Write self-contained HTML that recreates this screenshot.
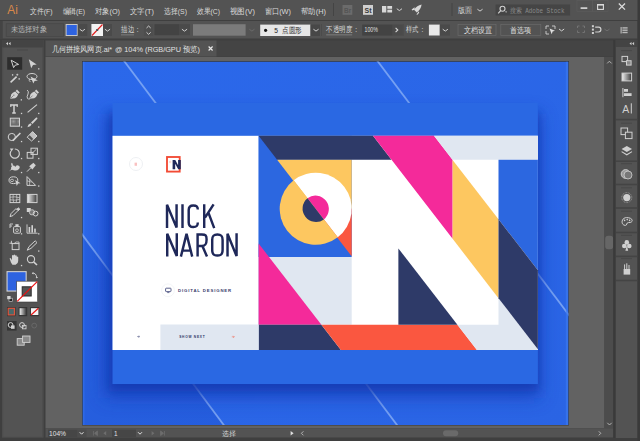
<!DOCTYPE html>
<html><head><meta charset="utf-8">
<style>
html,body{margin:0;padding:0;width:640px;height:441px;overflow:hidden;background:#424242;}
svg{position:absolute;left:0;top:0;}
text{font-family:"Liberation Sans",sans-serif;}
</style></head><body>
<svg width="640" height="441" viewBox="0 0 640 441">
<defs>
<linearGradient id="abg" x1="0" y1="0" x2="1" y2="1">
<stop offset="0" stop-color="#2b68ea"/><stop offset="1" stop-color="#2a64e4"/>
</linearGradient>
<linearGradient id="grad" x1="0" y1="0" x2="1" y2="0">
<stop offset="0" stop-color="#f0f0f0"/><stop offset="1" stop-color="#3a3a3a"/>
</linearGradient>
<filter id="soft"><feGaussianBlur stdDeviation="0.35"/></filter>
<filter id="sh2" x="-20%" y="-20%" width="140%" height="150%"><feGaussianBlur stdDeviation="4"/></filter>
<filter id="sh" x="-20%" y="-20%" width="140%" height="150%"><feGaussianBlur stdDeviation="9"/></filter>
<clipPath id="abclip"><rect x="82.5" y="61.5" width="486" height="363.5"/></clipPath>
<pattern id="hatch" width="1.2" height="1.2" patternUnits="userSpaceOnUse"><rect width="1.2" height="1.2" fill="#6e6e6e"/><rect width="0.6" height="0.6" fill="#9a9a9a"/></pattern>
</defs>
<rect x="0" y="0" width="640" height="441" fill="#3f3f3f"/>
<rect x="0" y="0" width="640" height="20" fill="#535353"/>
<rect x="0" y="21" width="637.5" height="17.5" fill="#535353"/>
<rect x="2" y="40" width="41.5" height="397.5" fill="#535353"/>
<rect x="2" y="40" width="41.5" height="7.3" fill="#444444"/><rect x="2.8" y="47.3" width="40" height="390" fill="none" stroke="#4a4a4a" stroke-width="0.8"/>
<rect x="17" y="49.5" width="11" height="1" fill="#484848"/>
<rect x="45.5" y="40.5" width="570" height="16" fill="#444444"/>
<rect x="45.5" y="40.5" width="171" height="16" fill="#535353"/>
<rect x="45.5" y="57" width="559" height="371.2" fill="#626262"/>
<rect x="604.4" y="57" width="9" height="371.2" fill="#4c4c4c"/>
<rect x="605.2" y="235.8" width="8" height="13.5" rx="3" fill="#666666"/>
<rect x="615.5" y="40" width="22" height="398" fill="#535353"/>
<rect x="615.5" y="40" width="22" height="7" fill="#444444"/>
<rect x="45.5" y="428.2" width="568" height="9.3" fill="#535353"/>
<text x="7.3" y="13.6" font-size="12.4" fill="#d9884a" textLength="10.5" lengthAdjust="spacingAndGlyphs">Ai</text>
<text x="30" y="13.6" font-size="8" fill="#dadada" font-weight="normal" textLength="22.5" lengthAdjust="spacingAndGlyphs" >文件(F)</text>
<text x="62.5" y="13.6" font-size="8" fill="#dadada" font-weight="normal" textLength="22.5" lengthAdjust="spacingAndGlyphs" >编辑(E)</text>
<text x="95" y="13.6" font-size="8" fill="#dadada" font-weight="normal" textLength="25.0" lengthAdjust="spacingAndGlyphs" >对象(O)</text>
<text x="130" y="13.6" font-size="8" fill="#dadada" font-weight="normal" textLength="24.0" lengthAdjust="spacingAndGlyphs" >文字(T)</text>
<text x="164" y="13.6" font-size="8" fill="#dadada" font-weight="normal" textLength="23.0" lengthAdjust="spacingAndGlyphs" >选择(S)</text>
<text x="197" y="13.6" font-size="8" fill="#dadada" font-weight="normal" textLength="23.0" lengthAdjust="spacingAndGlyphs" >效果(C)</text>
<text x="230" y="13.6" font-size="8" fill="#dadada" font-weight="normal" textLength="25.0" lengthAdjust="spacingAndGlyphs" >视图(V)</text>
<text x="264.5" y="13.6" font-size="8" fill="#dadada" font-weight="normal" textLength="26.5" lengthAdjust="spacingAndGlyphs" >窗口(W)</text>
<text x="301" y="13.6" font-size="8" fill="#dadada" font-weight="normal" textLength="25.0" lengthAdjust="spacingAndGlyphs" >帮助(H)</text>
<rect x="333" y="3" width="1" height="13" fill="#444444"/>
<rect x="342.5" y="5" width="9.8" height="9.8" fill="#6b6b6b"/>
<text x="344" y="12.6" font-size="6.5" fill="#555" font-weight="bold">Br</text>
<rect x="363" y="5" width="10" height="9.8" fill="#cfcfcf"/>
<text x="364.5" y="12.8" font-size="7" fill="#3a3a3a" font-weight="bold">St</text>
<rect x="382" y="6" width="4.3" height="6.5" fill="#d8d8d8"/><rect x="387.3" y="6" width="4.8" height="2.8" fill="#d8d8d8"/><rect x="387.3" y="9.7" width="4.8" height="2.8" fill="#d8d8d8"/>
<polyline points="396.79999999999995,8.7 399.4,10.600000000000001 402.0,8.7" fill="none" stroke="#d0d0d0" stroke-width="1.0"/>
<path d="M421.6,4.6 Q421,9.4 416.8,12.6 L414,9.8 Q417,5.4 421.6,4.6 Z M414.6,7.2 L411.6,9.6 L412.4,10.4 L414.6,9.6 Z M418.8,11.2 L416.4,14.4 L417.4,14.8 L419.2,12.8 Z" fill="#d8d8d8"/>
<rect x="451.5" y="3" width="1" height="13" fill="#444444"/>
<text x="457.6" y="13.2" font-size="8" fill="#d6d6d6" font-weight="normal" textLength="14.1" lengthAdjust="spacingAndGlyphs" >版面</text>
<polyline points="477.4,9.2 480,11.100000000000001 482.6,9.2" fill="none" stroke="#d0d0d0" stroke-width="1.0"/>
<rect x="495.6" y="4.5" width="74.5" height="11" fill="#454545"/>
<circle cx="502.5" cy="8.8" r="2.5" fill="none" stroke="#d0d0d0" stroke-width="1.1"/><line x1="500.7" y1="10.7" x2="498.2" y2="13.3" stroke="#d0d0d0" stroke-width="1.2"/><path d="M505,11.5 l2.2,0 l-1.1,1.3z" fill="#d0d0d0"/>
<text x="509.7" y="12.6" font-size="7" fill="#8a8a8a" font-family="Liberation Mono" textLength="54.8" lengthAdjust="spacingAndGlyphs" style="font-family:Liberation Mono">搜索 Adobe Stock</text>
<rect x="577" y="0.5" width="15.5" height="11" fill="none" stroke="#5c5c5c" stroke-width="0.6"/>
<rect x="592.5" y="0.5" width="15.5" height="11" fill="none" stroke="#5c5c5c" stroke-width="0.6"/>
<rect x="580.6" y="7.3" width="6.7" height="1.6" fill="#dcdcdc"/>
<rect x="597.6" y="4.6" width="5.8" height="4.8" fill="none" stroke="#dcdcdc" stroke-width="1.1"/><rect x="597.1" y="4.1" width="6.8" height="1.4" fill="#dcdcdc"/>
<path d="M618.8,3.5 L625,9.6 M625,3.5 L618.8,9.6" stroke="#dcdcdc" stroke-width="1.3"/>
<rect x="637.5" y="0" width="2.5" height="441" fill="#3a3a3a"/>
<rect x="0" y="21" width="2.7" height="18" fill="#444444"/><rect x="6.2" y="23.7" width="57.3" height="12.8" fill="#505050" stroke="#474747" stroke-width="0.8"/>
<text x="10.5" y="32.3" font-size="8" fill="#b8b8b8" font-weight="normal" textLength="36.3" lengthAdjust="spacingAndGlyphs" >未选择对象</text>
<rect x="65.6" y="24" width="12.2" height="12" fill="#c8c8c8"/><rect x="66.6" y="25" width="10.2" height="10" fill="#2e63e0"/>
<rect x="77.8" y="24" width="9.5" height="12" fill="#4a4a4a"/>
<polyline points="79.7,29.2 82.3,31.1 84.89999999999999,29.2" fill="none" stroke="#d0d0d0" stroke-width="1.0"/>
<rect x="91.4" y="24" width="11.6" height="12" fill="#f2f2f2"/><line x1="92" y1="35.5" x2="102.5" y2="24.5" stroke="#e01c1c" stroke-width="1.1"/><rect x="96.2" y="29" width="2" height="2" fill="#555"/>
<rect x="103" y="24" width="9" height="12" fill="#4a4a4a"/>
<polyline points="104.9,29.2 107.5,31.1 110.1,29.2" fill="none" stroke="#d0d0d0" stroke-width="1.0"/>
<text x="121" y="32.3" font-size="8" fill="#d6d6d6" font-weight="normal" textLength="13.0" lengthAdjust="spacingAndGlyphs" >描边</text>
<rect x="121" y="34.6" width="13" height="0.6" fill="#9a9a9a"/>
<text x="136.5" y="32.3" font-size="8" fill="#d6d6d6">:</text>
<rect x="143.9" y="24" width="9.4" height="12" fill="#4e4e4e"/>
<polyline points="146.5,28 148.6,26 150.7,28" fill="none" stroke="#d0d0d0" stroke-width="1"/><polyline points="146.5,32.3 148.6,34.3 150.7,32.3" fill="none" stroke="#d0d0d0" stroke-width="1"/>
<rect x="154.4" y="24.2" width="24.6" height="11" fill="#434343"/>
<rect x="179" y="24.2" width="11" height="11" fill="#4a4a4a"/>
<polyline points="181.9,29.2 184.5,31.1 187.1,29.2" fill="none" stroke="#d0d0d0" stroke-width="1.0"/>
<rect x="193" y="24.2" width="52.6" height="11.5" fill="#7b7b7b"/>
<polyline points="249.3,29.2 251.9,31.1 254.5,29.2" fill="none" stroke="#6a6a6a" stroke-width="1.0"/>
<rect x="260.2" y="24.6" width="50.3" height="11.4" fill="#e6e6e6"/>
<circle cx="265.6" cy="30.3" r="1.6" fill="#111"/>
<text x="274.3" y="32.8" font-size="7.5" fill="#222" font-weight="normal" textLength="3.7" lengthAdjust="spacingAndGlyphs" >5</text>
<text x="282.3" y="32.8" font-size="7.5" fill="#333" font-weight="normal" textLength="19.7" lengthAdjust="spacingAndGlyphs" >点圆形</text>
<rect x="310.5" y="24.6" width="9.5" height="11.4" fill="#474747"/>
<polyline points="313.4,29.2 316,31.1 318.6,29.2" fill="none" stroke="#d0d0d0" stroke-width="1.0"/>
<rect x="321" y="24" width="0.6" height="12" fill="#474747"/>
<text x="326.2" y="32.3" font-size="8" fill="#d6d6d6" font-weight="normal" textLength="25.8" lengthAdjust="spacingAndGlyphs" >不透明度</text>
<rect x="326.2" y="34.6" width="26" height="0.6" fill="#9a9a9a"/>
<text x="355" y="32.3" font-size="8" fill="#d6d6d6">:</text>
<rect x="362.2" y="24.6" width="30.4" height="11" fill="#434343"/>
<text x="364.5" y="32.0" font-size="7" fill="#e0e0e0" font-weight="normal" textLength="13.3" lengthAdjust="spacingAndGlyphs" >100%</text>
<rect x="392.6" y="24.6" width="10" height="11" fill="#4a4a4a"/>
<polyline points="395.6,27.8 397.8,30 395.6,32.2" fill="none" stroke="#d8d8d8" stroke-width="1.1"/>
<rect x="402.8" y="24" width="0.6" height="12" fill="#474747"/>
<text x="405.5" y="32.3" font-size="8" fill="#d6d6d6" font-weight="normal" textLength="12.5" lengthAdjust="spacingAndGlyphs" >样式</text>
<text x="421.2" y="32.3" font-size="8" fill="#d6d6d6">:</text>
<rect x="428.9" y="24.6" width="10.9" height="10.9" fill="#e8e8e8"/>
<rect x="439.8" y="24.6" width="10.2" height="11" fill="#4a4a4a"/>
<polyline points="442.7,29.2 445.3,31.1 447.90000000000003,29.2" fill="none" stroke="#d0d0d0" stroke-width="1.0"/>
<rect x="458" y="24.5" width="38" height="11" fill="none" stroke="#6a6a6a" stroke-width="0.7"/>
<text x="464" y="32.6" font-size="8" fill="#e0e0e0" font-weight="normal" textLength="28.0" lengthAdjust="spacingAndGlyphs" >文档设置</text>
<rect x="500.8" y="24.5" width="40" height="11" fill="none" stroke="#6a6a6a" stroke-width="0.7"/>
<text x="510.3" y="32.6" font-size="8" fill="#e0e0e0" font-weight="normal" textLength="21.1" lengthAdjust="spacingAndGlyphs" >首选项</text>
<path d="M546,26 h3 M546,26 v3 M555,26 h-3 M555,26 v3 M546,34 h3 M546,34 v-3" stroke="#d0d0d0" stroke-width="0.9" fill="none"/><path d="M549.5,28.5 l5.5,2.2 l-2.4,0.9 l-0.9,2.6 z" fill="#e0e0e0"/>
<polyline points="559.0,29.0 561.6,30.900000000000002 564.2,29.0" fill="none" stroke="#d0d0d0" stroke-width="1.0"/>
<path d="M577.5,26 h2 M577.5,26 v2 M584.5,26 h-2 M584.5,26 v2 M577.5,32.5 h2 M577.5,32.5 v-2 M584.5,32.5 h-2 M584.5,32.5 v-2" stroke="#777" stroke-width="0.9" fill="none"/>
<rect x="591.9" y="25.2" width="2" height="2" fill="#d0d0d0"/><rect x="591.9" y="28.6" width="2" height="2" fill="#d0d0d0"/><rect x="591.9" y="32" width="2" height="2" fill="#d0d0d0"/>
<path d="M595.2,27.2 h3.3 a2.4,2.4 0 0 1 0,4.8 h-3.3" fill="none" stroke="#d0d0d0" stroke-width="1.2"/>
<polyline points="604.4,29.0 607,30.900000000000002 609.6,29.0" fill="none" stroke="#6e6e6e" stroke-width="1.0"/>
<rect x="620.6" y="27" width="1" height="6.5" fill="#c8c8c8"/><rect x="622.4" y="27.2" width="5.2" height="1.4" fill="#b8b8b8"/><rect x="622.4" y="29.5" width="5.2" height="1.4" fill="#b8b8b8"/><rect x="622.4" y="31.8" width="5.2" height="1.4" fill="#b8b8b8"/>
<text x="51.5" y="51.6" font-size="8" fill="#e2e2e2" font-weight="normal" textLength="60.6" lengthAdjust="spacingAndGlyphs" >几何拼接风网页.ai*</text>
<text x="114.9" y="51.6" font-size="8" fill="#e2e2e2" font-weight="normal" textLength="85.1" lengthAdjust="spacingAndGlyphs" >@ 104% (RGB/GPU 预览)</text>
<path d="M208.6,46.5 L212.6,50.5 M212.6,46.5 L208.6,50.5" stroke="#e8e8e8" stroke-width="1.2"/>
<path d="M6,43.6 l2,-1.6 v3.2z M8.6,43.6 l2,-1.6 v3.2z" fill="#cfcfcf"/>
<path d="M629.5,43.6 l2,-1.6 v3.2z M632.1,43.6 l2,-1.6 v3.2z" fill="#cfcfcf"/><rect x="7.2" y="57.2" width="15" height="12.5" fill="#2d2d2d"/>
<path d="M11.2,60.2 L18.6,64.4 L15.2,65.2 L13.6,67.6 Z" fill="none" stroke="#d2d2d2" stroke-width="1"/>
<path d="M28.8,59.2 L36.7,64.4 L33,65 L31.2,68.3 Z" fill="#d2d2d2"/><rect x="38.1" y="68.2" width="1.3" height="1.3" fill="#d2d2d2"/>
<line x1="10.6" y1="82.4" x2="16.6" y2="76.6" stroke="#d2d2d2" stroke-width="1.6"/><path d="M17.3,73.7 v2 M16.3,74.7 h2 M12.6,74.2 v1.4 M11.9,74.9 h1.4 M19.2,78.2 v1.4 M18.5,78.9 h1.4" stroke="#d2d2d2" stroke-width="0.8"/>
<ellipse cx="32" cy="76.5" rx="5" ry="3" fill="none" stroke="#d2d2d2" stroke-width="1"/><path d="M30.5,76.5 L37.9,80.5 L34.6,81 L33.3,83.4 Z" fill="#d2d2d2"/><path d="M29.5,79 q-1,2 1,3" fill="none" stroke="#d2d2d2" stroke-width="0.8"/>
<path d="M10.2,98.8 L11.2,94.6 Q12.4,92.4 15.2,91.4 L18.2,94.4 Q17.2,97.2 15,98.2 Z" fill="#d2d2d2"/><path d="M15.6,91 L17,89.6 L19.8,92.4 L18.4,93.8 Z" fill="#d2d2d2"/><path d="M10.6,98.4 L13.4,95.6" stroke="#6a6a6a" stroke-width="0.7"/><circle cx="13.9" cy="95.1" r="0.6" fill="#6a6a6a"/><rect x="20.7" y="99.2" width="1.3" height="1.3" fill="#d2d2d2"/>
<path d="M29.4,98.8 L30.4,94.6 Q31.6,92.4 34.4,91.4 L37.4,94.4 Q36.4,97.2 34.2,98.2 Z" fill="#d2d2d2"/><path d="M34.8,91 L36.2,89.6 L39,92.4 L37.6,93.8 Z" fill="#d2d2d2"/><path d="M29.8,98.4 L32.6,95.6" stroke="#6a6a6a" stroke-width="0.7"/><path d="M27.2,90 Q29.2,91.6 28,94 Q26.4,97 27.6,98.6 Q28.6,99.4 30,98.8" fill="none" stroke="#d2d2d2" stroke-width="0.9"/>
<path d="M10.3,105 H17.7 M14,105 V113 M12.2,113 h3.6" fill="none" stroke="#d2d2d2" stroke-width="1.5"/><rect x="10.2" y="104.4" width="1.2" height="2.6" fill="#d2d2d2"/><rect x="16.6" y="104.4" width="1.2" height="2.6" fill="#d2d2d2"/><rect x="20.9" y="112.80000000000001" width="1.3" height="1.3" fill="#d2d2d2"/>
<line x1="27.6" y1="112.4" x2="37" y2="104.6" stroke="#d2d2d2" stroke-width="1.1"/><rect x="38.1" y="112.80000000000001" width="1.3" height="1.3" fill="#d2d2d2"/>
<rect x="10.3" y="118.2" width="9.2" height="8" fill="url(#hatch)" stroke="#d2d2d2" stroke-width="1"/><rect x="20.9" y="126.4" width="1.3" height="1.3" fill="#d2d2d2"/>
<path d="M27.4,127.2 Q28,124.2 30.4,123.2 L31.6,124.4 Q30.8,126.6 27.4,127.2 Z" fill="#d2d2d2"/><path d="M31,122.6 L36.2,117.6 Q37.6,117.4 37.4,118.8 L32.4,124 Z" fill="#d2d2d2"/><rect x="38.1" y="126.4" width="1.3" height="1.3" fill="#d2d2d2"/>
<circle cx="11.8" cy="137" r="3.6" fill="none" stroke="#d2d2d2" stroke-width="1"/><line x1="12.8" y1="140.6" x2="20.4" y2="133" stroke="#d2d2d2" stroke-width="1.6"/><rect x="20.9" y="140.9" width="1.3" height="1.3" fill="#d2d2d2"/>
<path d="M27.2,137.2 L32.6,131.6 L37,136 L31.6,141 Z" fill="none" stroke="#d2d2d2" stroke-width="1"/><path d="M29.4,135 L32.6,131.6 L37,136 L33.8,139.4 Z" fill="#d2d2d2" opacity="0.85"/><rect x="38.1" y="140.9" width="1.3" height="1.3" fill="#d2d2d2"/>
<path d="M11,151 A4.6,4.6 0 1 0 14.8,149" fill="none" stroke="#d2d2d2" stroke-width="1.2"/><path d="M10,148.4 L13.6,148.6 L11.4,151.6 Z" fill="#d2d2d2"/><rect x="20.9" y="157.9" width="1.3" height="1.3" fill="#d2d2d2"/>
<rect x="27.2" y="152.4" width="5.8" height="5.8" fill="none" stroke="#d2d2d2" stroke-width="1"/><rect x="31" y="148.2" width="6.4" height="6.2" fill="none" stroke="#d2d2d2" stroke-width="1"/><line x1="31.4" y1="154" x2="36.4" y2="149.2" stroke="#d2d2d2" stroke-width="0.9"/><rect x="38.1" y="157.9" width="1.3" height="1.3" fill="#d2d2d2"/>
<path d="M9,171.6 q2.4,-2.6 4.6,-1.4 q3,1.2 5.4,-1.2 q1.8,-2.6 -0.8,-3.6 q-2.4,-0.6 -2.8,1.6 q-1,-1.6 -2.6,-1.4 q0.6,-2 -1.4,-2.8 q-0.6,2 0.4,3.6 q-1.4,1 -0.6,2.6 z" fill="#d2d2d2"/><rect x="20.9" y="171.9" width="1.3" height="1.3" fill="#d2d2d2"/>
<path d="M27,171.6 L30.6,168" stroke="#d2d2d2" stroke-width="1"/><path d="M29.2,166.2 L33.4,162.8 L35.8,165.2 L32.4,169.4 Z" fill="#d2d2d2"/><rect x="38.1" y="171.9" width="1.3" height="1.3" fill="#d2d2d2"/>
<ellipse cx="13.4" cy="180.2" rx="4.4" ry="3.4" fill="none" stroke="#d2d2d2" stroke-width="1"/><ellipse cx="12" cy="180.4" rx="1.6" ry="1.2" fill="none" stroke="#d2d2d2" stroke-width="0.8"/><path d="M15.2,180 L20.6,183.2 L18,183.6 L16.8,186 Z" fill="#d2d2d2"/>
<path d="M27,176.6 V185.4 H35.6 Z" fill="none" stroke="#d2d2d2" stroke-width="1"/><path d="M27,180.8 L31.6,182.2 M29.6,178.8 V185.4" stroke="#d2d2d2" stroke-width="0.7"/><rect x="38.1" y="185.4" width="1.3" height="1.3" fill="#d2d2d2"/>
<rect x="10" y="194.4" width="9.8" height="8.2" fill="none" stroke="#d2d2d2" stroke-width="1"/><path d="M10,197.2 q5,-1 9.8,0.6 M10,199.8 q5,1 9.8,-0.4 M13.2,194.4 q-0.6,4 0.4,8.2 M16.6,194.4 q0.8,4 -0.4,8.2" fill="none" stroke="#d2d2d2" stroke-width="0.7"/>
<rect x="27.4" y="194.4" width="9.6" height="8.2" fill="url(#grad)" stroke="#d2d2d2" stroke-width="1"/>
<path d="M10,216.6 L11,213.6 L16,208.6 L18,210.6 L13,215.6 Z" fill="none" stroke="#d2d2d2" stroke-width="1"/><path d="M16.8,209.4 l1.6,-1.6 l1.4,1.4 l-1.6,1.6" fill="#d2d2d2" stroke="#d2d2d2" stroke-width="1"/><rect x="20.9" y="216.9" width="1.3" height="1.3" fill="#d2d2d2"/>
<rect x="26.8" y="208" width="4" height="4" fill="#d2d2d2"/><circle cx="32" cy="212.3" r="2.6" fill="#777" stroke="#d2d2d2" stroke-width="0.8"/><circle cx="35.6" cy="213.6" r="2.4" fill="none" stroke="#d2d2d2" stroke-width="1"/>
<path d="M10,224 h3 M10,224 v4 M10,226 h2" stroke="#d2d2d2" stroke-width="0.9" fill="none"/><rect x="13.6" y="226.6" width="6.8" height="6.6" rx="1" fill="none" stroke="#d2d2d2" stroke-width="1"/><rect x="15.4" y="224.2" width="3.2" height="2.4" fill="#d2d2d2"/><circle cx="17" cy="230.2" r="1.4" fill="none" stroke="#d2d2d2" stroke-width="0.8"/><rect x="20.9" y="233.20000000000002" width="1.3" height="1.3" fill="#d2d2d2"/>
<path d="M27,224.4 V233.2 H37.6" fill="none" stroke="#d2d2d2" stroke-width="0.9"/><rect x="28.6" y="227" width="1.6" height="5.6" fill="#d2d2d2"/><rect x="31.4" y="225.2" width="1.6" height="7.4" fill="#d2d2d2"/><rect x="34.2" y="228.6" width="1.6" height="4" fill="#d2d2d2"/><rect x="38.1" y="233.20000000000002" width="1.3" height="1.3" fill="#d2d2d2"/>
<path d="M9.4,243.2 h3 M11.4,240.8 v3" stroke="#d2d2d2" stroke-width="0.9"/><rect x="12.2" y="243.6" width="6.8" height="6" fill="none" stroke="#d2d2d2" stroke-width="1"/><path d="M14,243.6 l2,-1.6 l3,0 v1.6" fill="none" stroke="#d2d2d2" stroke-width="0.8"/>
<path d="M27.2,250.2 L29,246.6 L35.2,240.8 L37,242.6 L31,248.4 Z" fill="none" stroke="#d2d2d2" stroke-width="1"/><rect x="38.1" y="250.4" width="1.3" height="1.3" fill="#d2d2d2"/>
<path d="M11,262.6 L9.6,258.6 q0.4,-1 1.4,0 l1,1.6 V255.6 q0.8,-1 1.6,0 V259 V255 q0.8,-1 1.6,0 V259 V255.8 q0.8,-1 1.6,0 V259.8 V257 q0.8,-0.8 1.4,0 V261 q0,3 -2.6,3.8 h-3.2 Z" fill="#d2d2d2"/><rect x="20.9" y="264.9" width="1.3" height="1.3" fill="#d2d2d2"/>
<circle cx="31" cy="259.2" r="3.6" fill="none" stroke="#d2d2d2" stroke-width="1.1"/><line x1="33.6" y1="261.8" x2="37" y2="265" stroke="#d2d2d2" stroke-width="1.6"/>
<rect x="6.5" y="271.1" width="20.2" height="20.5" fill="#d2d2d2"/><rect x="7.6" y="272.2" width="18" height="18.3" fill="#2e63e0"/>
<rect x="16.7" y="281.2" width="20.9" height="20.8" fill="#ffffff" stroke="#3a3a3a" stroke-width="0.6"/><rect x="22.2" y="286.8" width="9" height="9.2" fill="#555555" stroke="#2b2b2b" stroke-width="1"/><line x1="17.2" y1="301.4" x2="37.2" y2="281.6" stroke="#ee1111" stroke-width="1.2"/>
<path d="M32.4,273.2 q3.6,-0.6 4.4,4.4" fill="none" stroke="#d2d2d2" stroke-width="0.9"/><path d="M31.8,273.2 l1.6,-1.2 v2.4z M36.8,278.6 l-1.2,-1.6 h2.4z" fill="#d2d2d2"/>
<rect x="9" y="298.2" width="3.5" height="3.2" fill="#222" stroke="#d2d2d2" stroke-width="0.6"/><rect x="7.2" y="296" width="3.4" height="3.2" fill="#d2d2d2"/>
<rect x="7" y="307" width="8.6" height="9.2" fill="#363636"/><rect x="8.2" y="308.3" width="6.2" height="6.6" fill="#4a6a6a" stroke="#e8553c" stroke-width="1.1"/>
<rect x="18.6" y="307" width="8.6" height="9.2" fill="#363636"/><rect x="19.6" y="308.2" width="6.6" height="6.8" fill="url(#grad)"/>
<rect x="30.2" y="307" width="9" height="9.2" fill="#363636"/><rect x="31" y="308.2" width="7.4" height="6.8" fill="#f4f4f4"/><line x1="31" y1="315" x2="38.4" y2="308.2" stroke="#e81818" stroke-width="1.2"/>
<rect x="7" y="321" width="9.6" height="9.6" fill="#363636"/><circle cx="10.6" cy="325" r="2.4" fill="none" stroke="#d2d2d2" stroke-width="1"/><rect x="11" y="325.4" width="3.6" height="3.4" fill="#d2d2d2"/>
<circle cx="22" cy="325" r="2.4" fill="none" stroke="#d2d2d2" stroke-width="1"/><rect x="22.4" y="325.4" width="3.6" height="3.4" fill="none" stroke="#d2d2d2" stroke-width="0.9"/>
<circle cx="34.2" cy="325.6" r="2.4" fill="none" stroke="#6a6a6a" stroke-width="0.9"/>
<rect x="17.2" y="338.6" width="7" height="6.6" fill="#8a8a8a" stroke="#d2d2d2" stroke-width="0.9"/><rect x="22.6" y="336" width="7.4" height="6.4" fill="#8a8a8a" stroke="#d2d2d2" stroke-width="0.9"/><rect x="615.5" y="118.8" width="22" height="1.6" fill="#444444"/>
<rect x="615.5" y="160.4" width="22" height="1.6" fill="#444444"/>
<rect x="615.5" y="183.7" width="22" height="1.6" fill="#444444"/>
<rect x="615.5" y="207.2" width="22" height="1.6" fill="#444444"/>
<rect x="615.5" y="231.7" width="22" height="1.6" fill="#444444"/>
<rect x="615.5" y="255.6" width="22" height="1.6" fill="#444444"/>
<rect x="615.5" y="279.7" width="22" height="1.6" fill="#444444"/>
<rect x="621" y="50.2" width="11" height="0.9" fill="#474747"/>
<rect x="621" y="122.7" width="11" height="0.9" fill="#474747"/>
<rect x="621" y="163.3" width="11" height="0.9" fill="#474747"/>
<rect x="621" y="187.4" width="11" height="0.9" fill="#474747"/>
<rect x="621" y="210.7" width="11" height="0.9" fill="#474747"/>
<rect x="621" y="234.8" width="11" height="0.9" fill="#474747"/>
<rect x="621" y="258.2" width="11" height="0.9" fill="#474747"/>
<rect x="613.3" y="40" width="2.2" height="398" fill="#3a3a3a"/>
<rect x="622" y="56.4" width="5.6" height="5.2" fill="none" stroke="#d0d0d0" stroke-width="1"/><rect x="626" y="60.2" width="5.6" height="5.4" fill="#d0d0d0"/><rect x="627" y="61.2" width="3.6" height="3.4" fill="#888"/>
<rect x="622" y="73.1" width="9.6" height="7.8" fill="url(#grad)" stroke="#d0d0d0" stroke-width="1"/>
<rect x="622.4" y="88" width="1" height="9.2" fill="#d0d0d0"/><rect x="624" y="89" width="4" height="2.8" fill="#d0d0d0"/><rect x="624" y="93.2" width="7.6" height="2.8" fill="#d0d0d0"/>
<text x="622.2" y="113.4" font-size="11" fill="#d0d0d0" textLength="7" lengthAdjust="spacingAndGlyphs">A</text><rect x="630.8" y="103.3" width="1" height="10.2" fill="#d0d0d0"/>
<rect x="621" y="128" width="6.6" height="6.6" fill="none" stroke="#d0d0d0" stroke-width="1"/><rect x="625.4" y="132.2" width="6.6" height="6.4" fill="#535353" stroke="#d0d0d0" stroke-width="1"/>
<path d="M621.6,149 L626.8,146 L632,149 L626.8,152 Z" fill="#d0d0d0"/><path d="M621.6,151.6 L626.8,154.8 L632,151.6" fill="none" stroke="#d0d0d0" stroke-width="1.1"/>
<circle cx="625.6" cy="174" r="4.4" fill="#9a9a9a" stroke="#d0d0d0" stroke-width="0.9"/><circle cx="628" cy="175" r="4" fill="#777" stroke="#d0d0d0" stroke-width="0.8"/>
<circle cx="626.8" cy="197.6" r="3.6" fill="#d0d0d0"/><circle cx="626.8" cy="197.6" r="5" fill="none" stroke="#a8a8a8" stroke-width="0.9" stroke-dasharray="0.8 0.8"/>
<path d="M626.6,217.6 C621,217.6 620.6,225.4 625.4,225.4 C627.4,225.4 626,222.6 628.4,222.6 C631,222.6 632.2,221.8 632.2,220.6 C632.2,218.6 629.6,217.6 626.6,217.6 Z" fill="none" stroke="#d0d0d0" stroke-width="1"/><circle cx="624.6" cy="220.4" r="0.8" fill="#d0d0d0"/><circle cx="627.2" cy="219.6" r="0.8" fill="#d0d0d0"/><circle cx="629.6" cy="220.4" r="0.8" fill="#d0d0d0"/>
<circle cx="626.8" cy="242.4" r="2.3" fill="#d0d0d0"/><circle cx="624.3" cy="246" r="2.3" fill="#d0d0d0"/><circle cx="629.3" cy="246" r="2.3" fill="#d0d0d0"/><path d="M626.8,245 L625.4,250.7 H628.2 Z" fill="#d0d0d0"/>
<rect x="623.6" y="269" width="6.6" height="5.6" fill="#d0d0d0"/><path d="M624.6,269 V264.4 M626.8,269 V263.3 M629,269 V265" stroke="#d0d0d0" stroke-width="1"/>
<polyline points="607.2,63.4 609.4,61.2 611.6,63.4" fill="none" stroke="#bdbdbd" stroke-width="0.9"/>
<polyline points="607.3,422.8 609.5,425 611.7,422.8" fill="none" stroke="#bdbdbd" stroke-width="0.9"/><rect x="48" y="429.6" width="29.6" height="7.4" fill="#464646"/>
<text x="49" y="435.8" font-size="6.4" fill="#e0e0e0" textLength="17" lengthAdjust="spacingAndGlyphs">104%</text>
<rect x="77.6" y="429.6" width="9" height="7.4" fill="#4c4c4c"/>
<polyline points="79.7,432.2 81.6,434.2 83.5,432.2" fill="none" stroke="#e0e0e0" stroke-width="1"/>
<path d="M93.4,431 V435.6 M97.4,431 L94.6,433.3 L97.4,435.6 Z" stroke="#6e6e6e" stroke-width="0.8" fill="#6e6e6e"/>
<path d="M106.2,431 L103.4,433.3 L106.2,435.6 Z" fill="#6e6e6e"/>
<rect x="112" y="429.6" width="24" height="7.4" fill="#464646"/>
<text x="114" y="435.8" font-size="6.4" fill="#e0e0e0">1</text>
<polyline points="138,432.2 140,434.2 142,432.2" fill="none" stroke="#e0e0e0" stroke-width="1"/>
<path d="M151.6,431 L154.4,433.3 L151.6,435.6 Z" fill="#6e6e6e"/>
<path d="M160.6,431 L163.4,433.3 L160.6,435.6 Z M164.4,431 V435.6" stroke="#6e6e6e" stroke-width="0.8" fill="#6e6e6e"/>
<text x="222" y="436" font-size="7.2" fill="#d8d8d8" textLength="14" lengthAdjust="spacingAndGlyphs">选择</text>
<path d="M290.6,431 L293.6,433.3 L290.6,435.6 Z" fill="#e0e0e0"/>
<polyline points="303.4,431.3 301.4,433.3 303.4,435.3" fill="none" stroke="#bdbdbd" stroke-width="0.9"/>
<rect x="443" y="430.3" width="15.2" height="6" rx="3" fill="#6a6a6a"/>
<polyline points="598.8,431.3 600.8,433.3 598.8,435.3" fill="none" stroke="#bdbdbd" stroke-width="0.9"/>
<!-- artboard -->
<rect x="82" y="61" width="487" height="364.5" fill="#3a3833"/>
<g clip-path="url(#abclip)">
<rect x="82.5" y="61.5" width="486" height="363.5" fill="url(#abg)"/><rect x="82.5" y="61.5" width="2" height="363.5" fill="#3a7af5" opacity="0.6"/>
<polygon points="82.5,235 265.4,481 82.5,481" fill="#0c2a9a" opacity="0.12"/>
<g stroke="#8fb4f6" stroke-width="1.8" opacity="0.75" filter="url(#soft)">
<line x1="78.4" y1="0" x2="439" y2="481"/>
<line x1="-92.2" y1="0" x2="265.4" y2="481"/>
<line x1="331.5" y1="0" x2="694" y2="481"/>
</g>
<rect x="104" y="114" width="436" height="284" fill="#1437b0" opacity="0.6" filter="url(#sh)"/>
<rect x="109" y="112" width="430" height="279" fill="#1030a8" opacity="0.5" filter="url(#sh2)"/>
<rect x="112.5" y="103" width="425.4" height="281" fill="#2a68e3"/>
<rect x="112.5" y="135.8" width="146.1" height="214.2" fill="#ffffff"/>
<rect x="565.8" y="61.5" width="2.7" height="363.5" fill="#3b78ee" opacity="0.7"/>
<rect x="258.6" y="135.8" width="279.3" height="214.2" fill="#ffffff"/>
<rect x="258.6" y="135.8" width="93.1" height="121.2" fill="#2c67e0"/>
<polygon points="258.6,135.8 373.0,135.8 391.5,159.7 277.1,159.7" fill="#2e3a68"/>
<polygon points="277.1,159.7 351.7,159.7 351.7,208.8 315.0,208.8" fill="#fdc760"/>
<polygon points="315.0,208.8 351.7,208.8 351.7,256.3" fill="#fa5740"/>
<path d="M293.69,180.31 A36.0,36.0 0 0 1 337.71,237.29 Z" fill="#ffffff"/>
<path d="M293.69,180.31 A36.0,36.0 0 0 0 337.71,237.29 Z" fill="#fdc760"/>
<path d="M307.51,198.20 A13.4,13.4 0 0 1 323.89,219.40 Z" fill="#f42a9a"/>
<path d="M307.51,198.20 A13.4,13.4 0 0 0 323.89,219.40 Z" fill="#2e3a68"/>
<rect x="258.6" y="257.0" width="93.1" height="67.7" fill="#e0e7f1"/>
<polygon points="258.6,243.5 258.6,324.7 321.4,324.7" fill="#f42a9a"/>
<polygon points="258.6,324.7 321.4,324.7 340.9,350.0 258.6,350.0" fill="#2e3a68"/>
<polygon points="321.4,324.7 457.4,324.7 476.9,350.0 340.9,350.0" fill="#fa5740"/>
<polygon points="457.4,324.7 498.5,324.7 498.5,298.2 537.9,349.2 537.9,350.0 476.9,350.0" fill="#e0e7f1"/>
<polygon points="398.4,248.4 398.4,324.7 457.4,324.7" fill="#2e3a68"/>
<polygon points="373.0,135.8 434.0,135.8 452.5,159.7 452.6,159.7 452.6,238.8" fill="#f42a9a"/>
<polygon points="434.0,135.8 537.9,135.8 537.9,159.7 452.5,159.7" fill="#e0e7f1"/>
<polygon points="452.6,159.9 498.5,219.3 498.5,298.2 452.6,238.8" fill="#fdc760"/>
<polygon points="498.5,159.7 537.9,159.7 537.9,270.2 498.5,219.3" fill="#2c67e0"/>
<polygon points="498.5,219.3 537.9,270.2 537.9,349.2 498.5,298.2" fill="#2e3a68"/>
<circle cx="136" cy="164" r="6.5" fill="none" stroke="#eceef2" stroke-width="0.9"/>
<path d="M134.6,163.2 h2.4 M134.6,164.2 h2.4 M134.6,165.2 h2.4" stroke="#f59a9a" stroke-width="0.7"/>
<rect x="167" y="157" width="12.7" height="14.6" fill="none" stroke="#f24b35" stroke-width="1.85"/>
<path d="M172.6,169.2 V159.9 H175.3 L178.1,165.2 V159.9 H180.8 V169.2 H178.2 L175.2,163.8 V169.2 Z" fill="#1f2859"/>
<circle cx="170.2" cy="162" r="0.8" fill="none" stroke="#f6a08f" stroke-width="0.4"/>
<path d="M167.025,228.1 V204.8 L176.57500000000002,227.6 V204.3" fill="none" stroke="#1f2859" stroke-width="2.45" stroke-linejoin="miter" stroke-miterlimit="2"/>
<path d="M182.5,204.3 V228.1" fill="none" stroke="#1f2859" stroke-width="2.45" stroke-linejoin="miter" stroke-miterlimit="2"/>
<path d="M197.8,209.6 C197.8,206.2 196.4,205.4 193.3,205.4 C190.2,205.4 188.7,206.4 188.7,210 V222.4 C188.7,226 190.2,227 193.3,227 C196.4,227 197.8,226.2 197.8,222.6" fill="none" stroke="#1f2859" stroke-width="2.45" stroke-linejoin="miter" stroke-miterlimit="2"/>
<path d="M204.2,204.3 V228.1 M213.6,204.3 L205,217.6 M208.4,212.6 L214.2,228.1" fill="none" stroke="#1f2859" stroke-width="2.45" stroke-linejoin="miter" stroke-miterlimit="2"/>
<path d="M167.225,256.6 V233.8 L176.775,256.1 V233.3" fill="none" stroke="#1f2859" stroke-width="2.45" stroke-linejoin="miter" stroke-miterlimit="2"/>
<path d="M180.9,256.6 L186.55,233.9 L192.2,256.6 M182.6,250.6 H190.5" fill="none" stroke="#1f2859" stroke-width="2.45" stroke-linejoin="miter" stroke-miterlimit="2"/>
<path d="M197.6,256.6 V234.4 H201.8 C205.6,234.4 206.6,235 206.6,239.6 C206.6,244.2 205.6,246 201.8,246 H197.6 M202.4,246 L207,256.6" fill="none" stroke="#1f2859" stroke-width="2.45" stroke-linejoin="miter" stroke-miterlimit="2"/>
<path d="M217.4,234.4 C213.5,234.4 212.2,236 212.2,240 V249.9 C212.2,253.9 213.5,255.5 217.4,255.5 C221.3,255.5 222.6,253.9 222.6,249.9 V240 C222.6,236 221.3,234.4 217.4,234.4 Z" fill="none" stroke="#1f2859" stroke-width="2.45" stroke-linejoin="miter" stroke-miterlimit="2"/>
<path d="M227.525,256.6 V233.8 L236.57500000000002,256.1 V233.3" fill="none" stroke="#1f2859" stroke-width="2.45" stroke-linejoin="miter" stroke-miterlimit="2"/>
<circle cx="168" cy="290.3" r="6.4" fill="none" stroke="#eef0f4" stroke-width="0.7"/>
<rect x="165.6" y="288.2" width="5.4" height="3.4" rx="0.6" fill="none" stroke="#4a5080" stroke-width="0.9"/><path d="M167.2,292.6 h2.2" stroke="#4a5080" stroke-width="0.8"/>
<text x="178" y="291.9" font-size="4.3" font-weight="bold" fill="#39406e" textLength="53.2" lengthAdjust="spacing">DIGITAL DESIGNER</text>
<rect x="160.4" y="324.5" width="98.3" height="25.5" fill="#e0e7f1"/>
<path d="M140,336.6 h-2.2 M138.8,335.6 l-1,1 l1,1" stroke="#4a5080" stroke-width="0.6" fill="none"/>
<text x="179.2" y="338.3" font-size="4.4" font-weight="bold" fill="#2c3565" textLength="26.2" lengthAdjust="spacingAndGlyphs" letter-spacing="1.0">SHOW NEXT</text>
<path d="M231.8,336.8 h2.4 M233.3,335.8 l1,1 l-1,1" stroke="#f06a55" stroke-width="0.6" fill="none"/>
</g>
</svg>
</body></html>
